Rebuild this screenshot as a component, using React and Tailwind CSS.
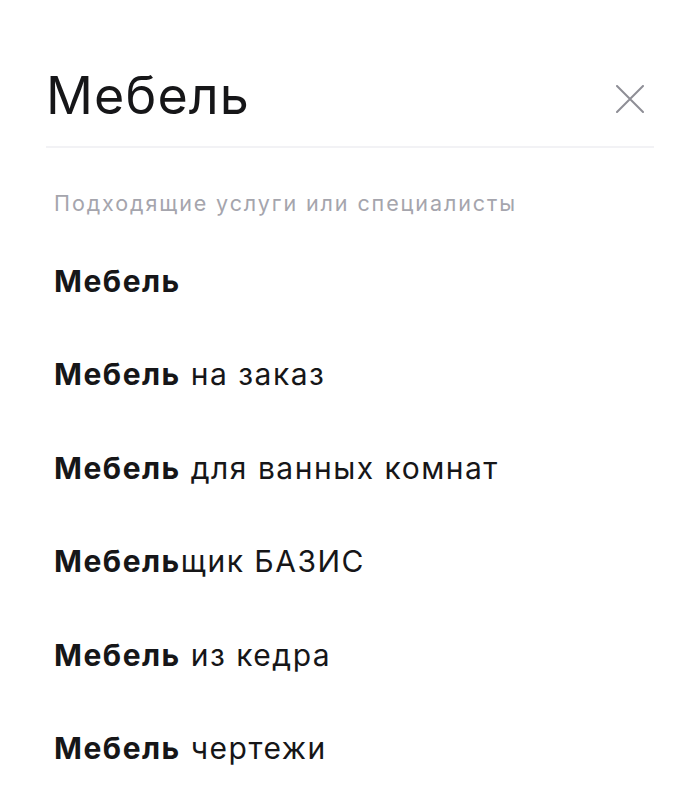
const ITEMS = [
  { bold: "Мебель", rest: "" },
  { bold: "Мебель", rest: " на заказ" },
  { bold: "Мебель", rest: " для ванных комнат" },
  { bold: "Мебель", rest: "щик БАЗИС" },
  { bold: "Мебель", rest: " из кедра" },
  { bold: "Мебель", rest: " чертежи" },
];

function CloseIcon() {
  return (
    <svg width="28" height="28" viewBox="0 0 28 28" fill="none" stroke="currentColor" strokeWidth="2" strokeLinecap="round">
      <path d="M1 1 L27 27 M27 1 L1 27" />
    </svg>
  );
}

export default function App() {
  return (
    <div className="min-h-screen bg-white px-[46px] font-['Inter',sans-serif] text-[#161618]">
      <div className="flex items-start justify-between pt-[70px] pb-[24px] border-b-2 border-[#f2f2f5]">
        <h1 className="text-[52px] leading-[52px] font-normal tracking-[1.1px]">Мебель</h1>
        <button className="mt-[15px] mr-[10px] text-[#8e8e96]">
          <CloseIcon />
        </button>
      </div>

      <div className="px-2 pt-[43px]">
        <p className="text-[21.5px] leading-[24px] tracking-[1.9px] text-[#a5a5ad]">
          Подходящие услуги или специалисты
        </p>
        <ul className="mt-[46px]">
          {ITEMS.map((it, i) => (
            <li key={i} className="h-[93.4px] text-[30px] leading-[40px] tracking-[1.5px]">
              <span className="font-bold">{it.bold}</span>
              <span>{it.rest}</span>
            </li>
          ))}
        </ul>
      </div>
    </div>
  );
}
